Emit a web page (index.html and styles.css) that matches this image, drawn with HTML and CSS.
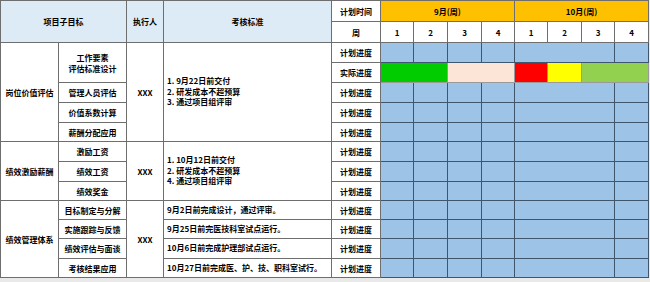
FILE: index.html
```html
<!DOCTYPE html>
<html lang="zh-CN">
<head>
<meta charset="utf-8">
<title>项目计划表</title>
<link rel="stylesheet" href="styles.css">
</head>
<body>
<div class="sheet">
  <!-- header row 1 -->
  <div class="cell hd c2 r2">项目子目标</div>
  <div class="cell hd r2">执行人</div>
  <div class="cell hd r2">考核标准</div>
  <div class="cell">计划时间</div>
  <div class="cell mon c4">9月(周)</div>
  <div class="cell mon c4">10月(周)</div>
  <!-- header row 2 -->
  <div class="cell">周</div>
  <div class="cell">1</div><div class="cell">2</div><div class="cell">3</div><div class="cell">4</div>
  <div class="cell">1</div><div class="cell">2</div><div class="cell">3</div><div class="cell">4</div>

  <!-- group 1 -->
  <div class="cell r5">岗位价值评估</div>
  <div class="cell r2">工作要素<br>评估标准设计</div>
  <div class="cell r5">XXX</div>
  <div class="cell r5 left">1. 9月22日前交付<br>2. 研发成本不超预算<br>3. 通过项目组评审</div>
  <div class="cell">计划进度</div>
  <div class="cell plan"></div><div class="cell plan"></div><div class="cell plan"></div><div class="cell plan"></div>
  <div class="cell plan c3"></div><div class="cell plan"></div>

  <div class="cell">实际进度</div>
  <div class="cell green c2"></div>
  <div class="cell peach c2"></div>
  <div class="cell red"></div>
  <div class="cell yellow"></div>
  <div class="cell lime c2"></div>

  <div class="cell">管理人员评估</div>
  <div class="cell">计划进度</div>
  <div class="cell plan"></div><div class="cell plan"></div><div class="cell plan"></div><div class="cell plan"></div>
  <div class="cell plan c3"></div><div class="cell plan"></div>

  <div class="cell">价值系数计算</div>
  <div class="cell">计划进度</div>
  <div class="cell plan"></div><div class="cell plan"></div><div class="cell plan"></div><div class="cell plan"></div>
  <div class="cell plan c3"></div><div class="cell plan"></div>

  <div class="cell">薪酬分配应用</div>
  <div class="cell">计划进度</div>
  <div class="cell plan"></div><div class="cell plan"></div><div class="cell plan"></div><div class="cell plan"></div>
  <div class="cell plan c3"></div><div class="cell plan"></div>

  <!-- group 2 -->
  <div class="cell r3">绩效激励薪酬</div>
  <div class="cell">激励工资</div>
  <div class="cell r3">XXX</div>
  <div class="cell r3 left">1. 10月12日前交付<br>2. 研发成本不超预算<br>4. 通过项目组评审</div>
  <div class="cell">计划进度</div>
  <div class="cell plan"></div><div class="cell plan"></div><div class="cell plan"></div><div class="cell plan"></div>
  <div class="cell plan c3"></div><div class="cell plan"></div>

  <div class="cell">绩效工资</div>
  <div class="cell">计划进度</div>
  <div class="cell plan"></div><div class="cell plan"></div><div class="cell plan"></div><div class="cell plan"></div>
  <div class="cell plan c3"></div><div class="cell plan"></div>

  <div class="cell">绩效奖金</div>
  <div class="cell">计划进度</div>
  <div class="cell plan"></div><div class="cell plan"></div><div class="cell plan"></div><div class="cell plan"></div>
  <div class="cell plan c3"></div><div class="cell plan"></div>

  <!-- group 3 -->
  <div class="cell r4">绩效管理体系</div>
  <div class="cell">目标制定与分解</div>
  <div class="cell r4">XXX</div>
  <div class="cell left">9月2日前完成设计，通过评审。</div>
  <div class="cell">计划进度</div>
  <div class="cell plan"></div><div class="cell plan"></div><div class="cell plan"></div><div class="cell plan"></div>
  <div class="cell plan c3"></div><div class="cell plan"></div>

  <div class="cell">实施跟踪与反馈</div>
  <div class="cell left">9月25日前完医技科室试点运行。</div>
  <div class="cell">计划进度</div>
  <div class="cell plan"></div><div class="cell plan"></div><div class="cell plan"></div><div class="cell plan"></div>
  <div class="cell plan c3"></div><div class="cell plan"></div>

  <div class="cell">绩效评估与面谈</div>
  <div class="cell left">10月6日前完成护理部试点运行。</div>
  <div class="cell">计划进度</div>
  <div class="cell plan"></div><div class="cell plan"></div><div class="cell plan"></div><div class="cell plan"></div>
  <div class="cell plan c3"></div><div class="cell plan"></div>

  <div class="cell">考核结果应用</div>
  <div class="cell left">10月27日前完成医、护、技、职科室试行。</div>
  <div class="cell">计划进度</div>
  <div class="cell plan"></div><div class="cell plan"></div><div class="cell plan"></div><div class="cell plan"></div>
  <div class="cell plan c3"></div><div class="cell plan"></div>
</div>
</body>
</html>
```

FILE: styles.css
```css
html {
  background: #e9e9e9;
}
body {
  margin: 0;
  font-family: "Noto Sans CJK SC", "Noto Sans", sans-serif;
  font-size: 8px;
  font-weight: 700;
  color: #000;
}
.sheet {
  display: grid;
  grid-template-columns: 58px 68px 37px 168px 49px 33px 34px 34px 33px 33px 34px 33px 34px;
  grid-template-rows: 21px 21px 20px 20px 20px 20px 19px 20px 20px 19px 19px 19px 20px 19px;
  width: max-content;
  border-top: 1px solid #6e6e6e;
  border-left: 1px solid #6e6e6e;
  background: #fff;
}
.cell {
  display: flex;
  align-items: center;
  justify-content: center;
  text-align: center;
  line-height: 11px;
  border-right: 1px solid #6e6e6e;
  border-bottom: 1px solid #6e6e6e;
  background: #fff;
  overflow: hidden;
  white-space: nowrap;
}
.left {
  justify-content: flex-start;
  text-align: left;
  padding-left: 3px;
  line-height: 10.7px;
}
.hd { background: #ddebf7; }
.mon { background: #ffc000; }
.plan {
  background: #9dc3e6;
  border-right-color: #3f566d;
  border-bottom-color: #3f566d;
}
.green { background: #00cc00; border-right-color: #9a9a9a; border-bottom-color: #9a9a9a; }
.peach { background: #fce4d6; border-right-color: #9a9a9a; border-bottom-color: #9a9a9a; }
.red { background: #ff0000; border-right-color: #9a9a9a; border-bottom-color: #9a9a9a; }
.yellow { background: #ffff00; border-right-color: #9a9a9a; border-bottom-color: #9a9a9a; }
.lime { background: #92d050; border-right-color: #9a9a9a; border-bottom-color: #9a9a9a; }
.c2 { grid-column: span 2; }
.c3 { grid-column: span 3; }
.c4 { grid-column: span 4; }
.r2 { grid-row: span 2; }
.r3 { grid-row: span 3; }
.r4 { grid-row: span 4; }
.r5 { grid-row: span 5; }
```
